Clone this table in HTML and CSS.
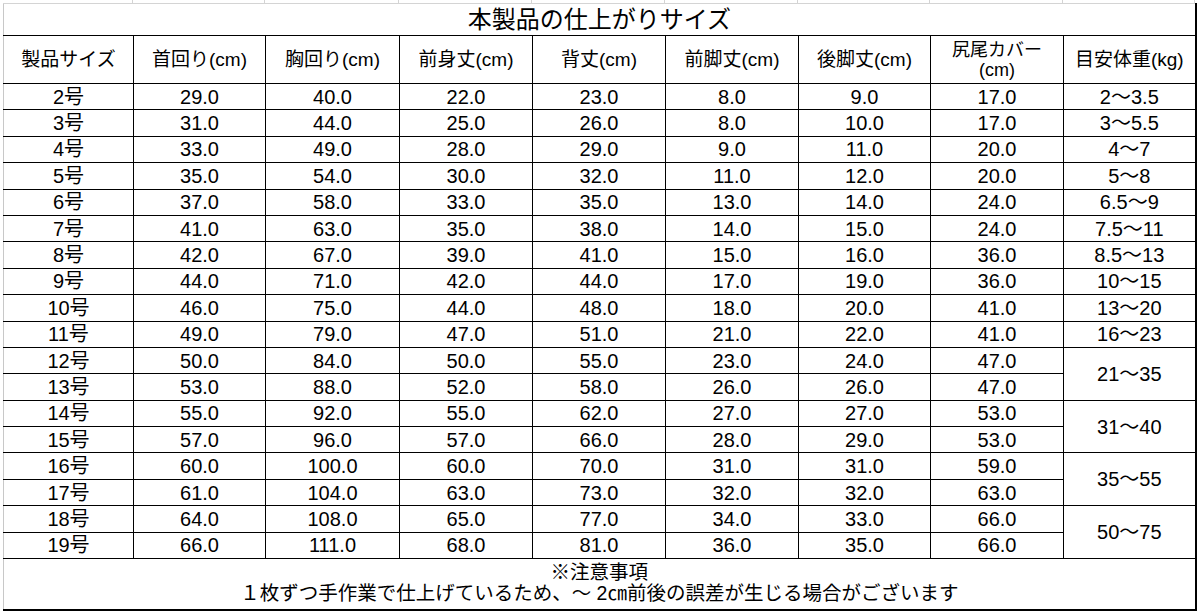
FILE: index.html
```html
<!DOCTYPE html>
<html lang="ja">
<head>
<meta charset="utf-8">
<title>本製品の仕上がりサイズ</title>
<link rel="stylesheet" href="styles.css">
</head>
<body>
<div class="sheet">
  <div class="topstrip">
    <span class="g c1"></span><span class="g c2"></span><span class="g c3"></span><span class="g c4"></span><span class="g c5"></span><span class="g c6"></span><span class="g c7"></span><span class="g c8"></span><span class="g c9"></span>
  </div>
  <table class="sizes">
    <colgroup>
      <col class="c1"><col class="c2"><col class="c3"><col class="c4"><col class="c5"><col class="c6"><col class="c7"><col class="c8"><col class="c9">
    </colgroup>
    <tr class="title"><td class="first last" colspan="9">本製品の仕上がりサイズ</td></tr>
    <tr class="head">
      <td class="first">製品サイズ</td><td>首回り(cm)</td><td>胸回り(cm)</td><td>前身丈(cm)</td><td>背丈(cm)</td><td>前脚丈(cm)</td><td>後脚丈(cm)</td><td class="two">尻尾カバー<br>(cm)</td><td class="last">目安体重(kg)</td>
    </tr>
    <tr><td class="first">2号</td><td>29.0</td><td>40.0</td><td>22.0</td><td>23.0</td><td>8.0</td><td>9.0</td><td>17.0</td><td class="last">2〜3.5</td></tr>
    <tr><td class="first">3号</td><td>31.0</td><td>44.0</td><td>25.0</td><td>26.0</td><td>8.0</td><td>10.0</td><td>17.0</td><td class="last">3〜5.5</td></tr>
    <tr><td class="first">4号</td><td>33.0</td><td>49.0</td><td>28.0</td><td>29.0</td><td>9.0</td><td>11.0</td><td>20.0</td><td class="last">4〜7</td></tr>
    <tr><td class="first">5号</td><td>35.0</td><td>54.0</td><td>30.0</td><td>32.0</td><td>11.0</td><td>12.0</td><td>20.0</td><td class="last">5〜8</td></tr>
    <tr><td class="first">6号</td><td>37.0</td><td>58.0</td><td>33.0</td><td>35.0</td><td>13.0</td><td>14.0</td><td>24.0</td><td class="last">6.5〜9</td></tr>
    <tr><td class="first">7号</td><td>41.0</td><td>63.0</td><td>35.0</td><td>38.0</td><td>14.0</td><td>15.0</td><td>24.0</td><td class="last">7.5〜11</td></tr>
    <tr><td class="first">8号</td><td>42.0</td><td>67.0</td><td>39.0</td><td>41.0</td><td>15.0</td><td>16.0</td><td>36.0</td><td class="last">8.5〜13</td></tr>
    <tr><td class="first">9号</td><td>44.0</td><td>71.0</td><td>42.0</td><td>44.0</td><td>17.0</td><td>19.0</td><td>36.0</td><td class="last">10〜15</td></tr>
    <tr><td class="first">10号</td><td>46.0</td><td>75.0</td><td>44.0</td><td>48.0</td><td>18.0</td><td>20.0</td><td>41.0</td><td class="last">13〜20</td></tr>
    <tr><td class="first">11号</td><td>49.0</td><td>79.0</td><td>47.0</td><td>51.0</td><td>21.0</td><td>22.0</td><td>41.0</td><td class="last">16〜23</td></tr>
    <tr><td class="first">12号</td><td>50.0</td><td>84.0</td><td>50.0</td><td>55.0</td><td>23.0</td><td>24.0</td><td>47.0</td><td class="last" rowspan="2">21〜35</td></tr>
    <tr><td class="first">13号</td><td>53.0</td><td>88.0</td><td>52.0</td><td>58.0</td><td>26.0</td><td>26.0</td><td>47.0</td></tr>
    <tr><td class="first">14号</td><td>55.0</td><td>92.0</td><td>55.0</td><td>62.0</td><td>27.0</td><td>27.0</td><td>53.0</td><td class="last" rowspan="2">31〜40</td></tr>
    <tr><td class="first">15号</td><td>57.0</td><td>96.0</td><td>57.0</td><td>66.0</td><td>28.0</td><td>29.0</td><td>53.0</td></tr>
    <tr><td class="first">16号</td><td>60.0</td><td>100.0</td><td>60.0</td><td>70.0</td><td>31.0</td><td>31.0</td><td>59.0</td><td class="last" rowspan="2">35〜55</td></tr>
    <tr><td class="first">17号</td><td>61.0</td><td>104.0</td><td>63.0</td><td>73.0</td><td>32.0</td><td>32.0</td><td>63.0</td></tr>
    <tr><td class="first">18号</td><td>64.0</td><td>108.0</td><td>65.0</td><td>77.0</td><td>34.0</td><td>33.0</td><td>66.0</td><td class="last" rowspan="2">50〜75</td></tr>
    <tr><td class="first">19号</td><td>66.0</td><td>111.0</td><td>68.0</td><td>81.0</td><td>36.0</td><td>35.0</td><td>66.0</td></tr>
    <tr class="note"><td class="first last" colspan="9">※注意事項<br>１枚ずつ手作業で仕上げているため、〜 2㎝前後の誤差が生じる場合がございます</td></tr>
  </table>
</div>
</body>
</html>
```

FILE: styles.css
```css
html, body {
  margin: 0;
  padding: 0;
  background: #ffffff;
}

body {
  font-family: "Liberation Sans", "Noto Sans CJK JP", sans-serif;
  color: #000;
  width: 1200px;
  height: 612px;
  overflow: hidden;
}

.sheet {
  padding-left: 3px;
}

.topstrip {
  display: flex;
  height: 3px;
}

.topstrip .g {
  display: block;
  height: 3px;
  border-right: 1px solid #d4d4d4;
  box-sizing: border-box;
}

.topstrip .c1 { width: 130px; }
.topstrip .c2 { width: 132px; }
.topstrip .c3 { width: 134px; }
.topstrip .c4 { width: 133px; }
.topstrip .c5 { width: 133px; }
.topstrip .c6 { width: 133px; }
.topstrip .c7 { width: 132px; }
.topstrip .c8 { width: 133px; }
.topstrip .c9 { width: 132px; }

.sizes {
  border-collapse: collapse;
  table-layout: fixed;
  width: 1192px;
}

col.c1 { width: 130px; }
col.c2 { width: 132px; }
col.c3 { width: 134px; }
col.c4 { width: 133px; }
col.c5 { width: 133px; }
col.c6 { width: 133px; }
col.c7 { width: 132px; }
col.c8 { width: 133px; }
col.c9 { width: 132px; }

.sizes td {
  border: 1px solid #000;
  padding: 0;
  height: 25.4px;
  text-align: center;
  vertical-align: middle;
  font-size: 20px;
  line-height: 22px;
  white-space: nowrap;
}

.sizes td.first {
  border-left: 1px solid #c8c8c8;
}

.sizes td.last {
  border-right: 2px solid #000;
}

.sizes .title td {
  border-top: 1px solid #d4d4d4;
  height: 31px;
  font-size: 24px;
  line-height: 28px;
}

.sizes .head td {
  height: 47px;
  font-size: 19px;
  line-height: 21px;
}

.sizes .head td.two {
  font-size: 18px;
  line-height: 20px;
}

.sizes .note td {
  height: 47px;
  border-bottom: 2px solid #000;
  font-size: 19.5px;
  line-height: 21px;
  padding-bottom: 3px;
}
```
